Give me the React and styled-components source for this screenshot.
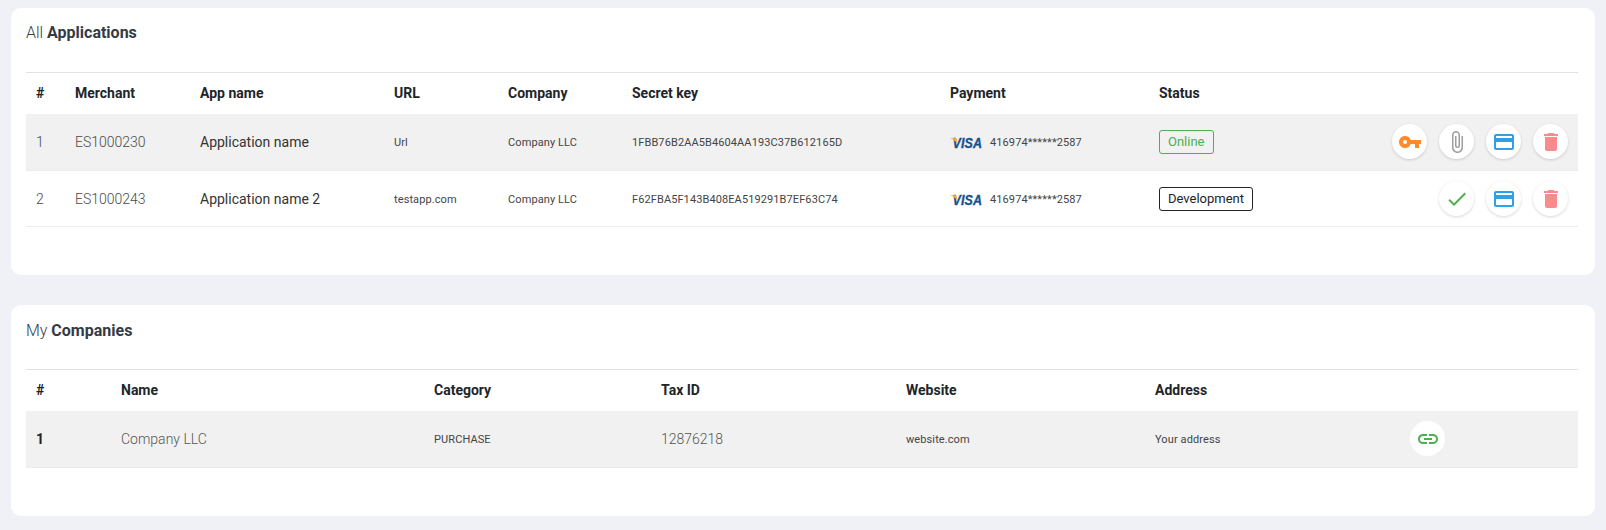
import React from 'react'
import styled, { createGlobalStyle } from 'styled-components'
import { MdVpnKey, MdAttachFile, MdCreditCard, MdDelete, MdCheck, MdLink } from 'react-icons/md'

const GlobalStyle = createGlobalStyle`
  html, body {
    margin: 0;
    padding: 0;
    background-color: #f0f1f6;
    font-family: Roboto, Arial, sans-serif;
  }
`

const Page = styled.div`
  display: flex;
  flex-direction: column;
  gap: 30px;
  padding: 8px 11px 14px;
`

const Card = styled.section`
  height: ${props => props.$height}px;
  box-sizing: border-box;
  padding: 0 17px 0 15px;
  background-color: #ffffff;
  border-radius: 10px;
`

const Title = styled.h2`
  height: 64px;
  margin: 0;
  padding-top: ${props => props.$top}px;
  box-sizing: border-box;
  font-size: 16px;
  line-height: 19px;
  font-weight: 300;
  color: #3c4043;

  b {
    font-weight: 700;
    color: #343a46;
  }
`

const Table = styled.table`
  width: 100%;
  table-layout: fixed;
  border-collapse: collapse;
  border-top: 1px solid #e2e2e8;
`

const HeadCell = styled.th`
  height: 41px;
  padding: 0 10px 1px;
  box-sizing: border-box;
  text-align: left;
  font-size: 14px;
  font-weight: 700;
  color: #212529;
`

const Row = styled.tr`
  height: 56px;
  background-color: ${props => (props.$shaded ? '#f1f1f1' : '#ffffff')};
  border-bottom: 1px solid #ececec;

  &:first-child {
    height: 57px;
  }
`

const Cell = styled.td`
  padding: 0 10px;
  font-size: 14px;
  font-weight: ${props => props.$weight || 300};
  color: ${props => props.$color || '#4a4a4a'};
  white-space: nowrap;
`

const SmallCell = styled.td`
  padding: 2px 10px 0;
  font-size: 11px;
  font-weight: 400;
  letter-spacing: 0.1px;
  color: #444;
  white-space: nowrap;
`

const Payment = styled.div`
  display: flex;
  align-items: center;
  gap: 8px;
`

const VisaLogo = () => (
  <svg width="32" height="18" viewBox="0 0 32 18">
    <text transform="translate(2.500 14) scale(1 1.1)" fontFamily="Liberation Sans, Arial, sans-serif" fontSize="12.500" fontWeight="700" fontStyle="italic" fill="#15528f" stroke="#15528f" strokeWidth="0.3">VISA</text>
    <path d="M0 4.200h6.500l1.200 6C6.300 7.500 3.500 5.300 0 4.200z" fill="#f2ae3d" />
  </svg>
)

const Badge = styled.span`
  display: inline-block;
  padding: 0 8px;
  height: 22px;
  line-height: 22px;
  font-size: 13px;
  border-radius: 3px;
  border: 1px solid ${props => (props.$online ? '#4caf50' : '#212529')};
  color: ${props => (props.$online ? '#4caf50' : '#212529')};
`

const Actions = styled.div`
  display: flex;
  justify-content: flex-end;
  gap: 12px;
`

const RoundButton = styled.button`
  width: 35px;
  height: 35px;
  padding: 0;
  display: flex;
  align-items: center;
  justify-content: center;
  border: none;
  border-radius: 50%;
  background-color: #ffffff;
  color: ${props => props.$color};
  box-shadow: ${props => (props.$flat ? 'none' : '0 1px 3px rgba(0, 0, 0, 0.16)')};
  font-size: 24px;
`

const colors = {
  key: '#ff8a2b',
  clip: '#9e9e9e',
  card: '#2f9fe6',
  trash: '#fb8a8d',
  check: '#4caf50'
}

const apps = [
  { id: 1, merchant: 'ES1000230', name: 'Application name', url: 'Url', secret: '1FBB76B2AA5B4604AA193C37B612165D', online: true },
  { id: 2, merchant: 'ES1000243', name: 'Application name 2', url: 'testapp.com', secret: 'F62FBA5F143B408EA519291B7EF63C74', online: false }
]

const appWidths = [39, 125, 194, 114, 124, 318, 209, 160]
const appHeads = ['#', 'Merchant', 'App name', 'URL', 'Company', 'Secret key', 'Payment', 'Status', '']
const companyWidths = [85, 313, 227, 245, 249, 255]
const companyHeads = ['#', 'Name', 'Category', 'Tax ID', 'Website', 'Address', '']

const Columns = ({ widths }) => (
  <colgroup>
    {widths.map((w, i) => <col key={i} style={{ width: w }} />)}
    <col />
  </colgroup>
)

const Head = ({ labels }) => (
  <thead>
    <tr>{labels.map((h, i) => <HeadCell key={i}>{h}</HeadCell>)}</tr>
  </thead>
)

const App = () => (
  <>
    <GlobalStyle />
    <Page>
      <Card $height={267}>
        <Title $top={15}>All <b>Applications</b></Title>
        <Table>
          <Columns widths={appWidths} />
          <Head labels={appHeads} />
          <tbody>
            {apps.map(app => (
              <Row key={app.id} $shaded={app.online}>
                <Cell>{app.id}</Cell>
                <Cell>{app.merchant}</Cell>
                <Cell $weight={400} $color="#333">{app.name}</Cell>
                <SmallCell>{app.url}</SmallCell>
                <SmallCell>Company LLC</SmallCell>
                <SmallCell>{app.secret}</SmallCell>
                <SmallCell>
                  <Payment><VisaLogo />416974******2587</Payment>
                </SmallCell>
                <Cell $weight={400}>
                  <Badge $online={app.online}>{app.online ? 'Online' : 'Development'}</Badge>
                </Cell>
                <Cell>
                  <Actions>
                    {app.online ? (
                      <>
                        <RoundButton $color={colors.key}><MdVpnKey /></RoundButton>
                        <RoundButton $color={colors.clip}><MdAttachFile /></RoundButton>
                      </>
                    ) : (
                      <RoundButton $color={colors.check}><MdCheck /></RoundButton>
                    )}
                    <RoundButton $color={colors.card}><MdCreditCard /></RoundButton>
                    <RoundButton $color={colors.trash}><MdDelete /></RoundButton>
                  </Actions>
                </Cell>
              </Row>
            ))}
          </tbody>
        </Table>
      </Card>
      <Card $height={211}>
        <Title $top={16}>My <b>Companies</b></Title>
        <Table>
          <Columns widths={companyWidths} />
          <Head labels={companyHeads} />
          <tbody>
            <Row $shaded>
              <Cell $weight={700} $color="#212529">1</Cell>
              <Cell $color="#555">Company LLC</Cell>
              <SmallCell>PURCHASE</SmallCell>
              <Cell $color="#555">12876218</Cell>
              <SmallCell>website.com</SmallCell>
              <SmallCell>Your address</SmallCell>
              <Cell>
                <RoundButton $flat $color={colors.check}><MdLink /></RoundButton>
              </Cell>
            </Row>
          </tbody>
        </Table>
      </Card>
    </Page>
  </>
)

export default App
